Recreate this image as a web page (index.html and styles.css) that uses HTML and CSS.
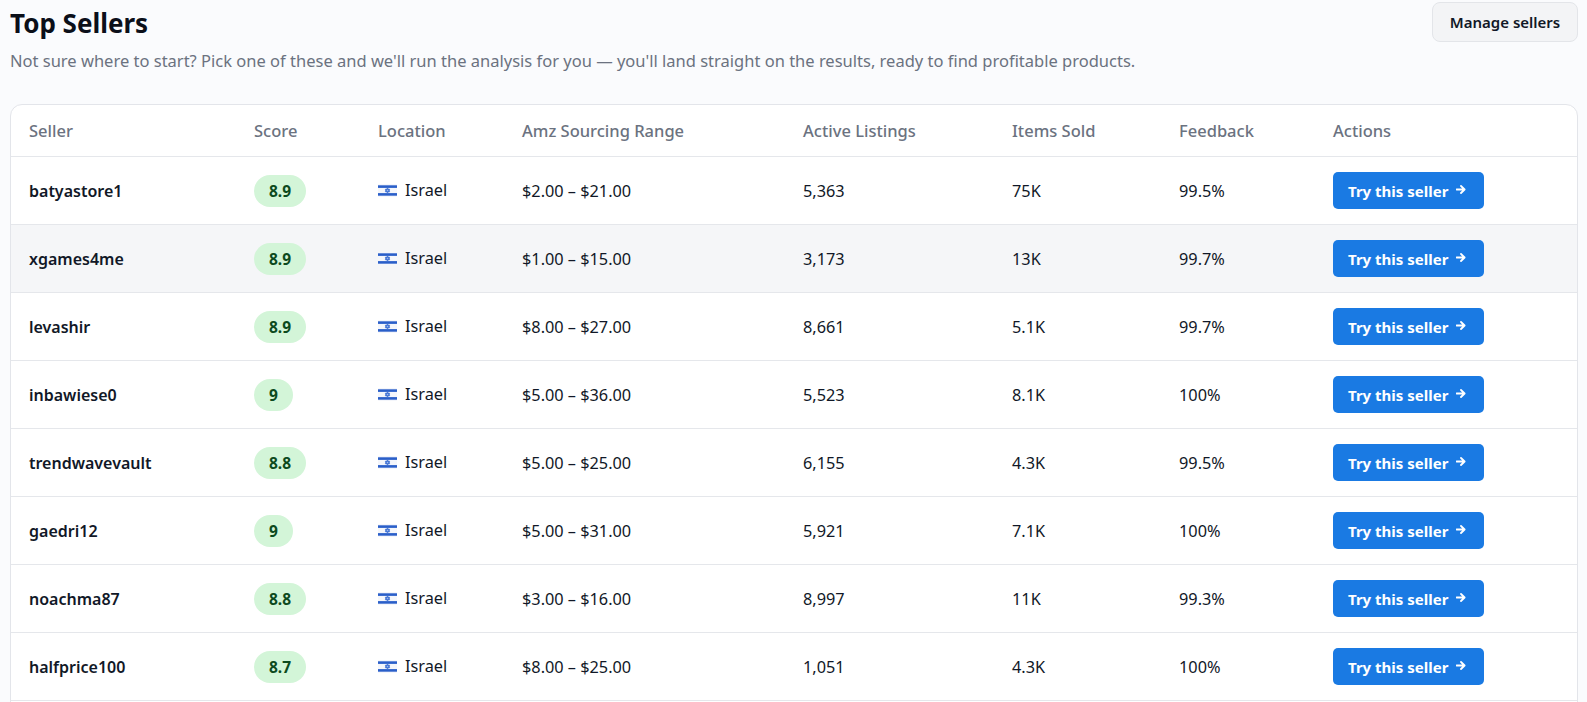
FILE: index.html
```html
<!DOCTYPE html>
<html lang="en">
<head>
<meta charset="utf-8">
<title>Top Sellers</title>
<link rel="stylesheet" href="styles.css">
</head>
<body>
<svg width="0" height="0" class="defs" aria-hidden="true">
  <defs>
    <symbol id="il" viewBox="0 0 19 13">
      <rect x="0" y="0" width="19" height="13" rx="1" fill="#f4f6fb"/>
      <rect x="0" y="1.3" width="19" height="2.6" fill="#2a5fc9"/>
      <rect x="0" y="9.1" width="19" height="2.6" fill="#2a5fc9"/>
      <circle cx="9.5" cy="6.5" r="2" fill="#9fb9ea"/>
      <polygon points="9.5,4.1 11.7,7.7 7.3,7.7" fill="none" stroke="#3d6fd3" stroke-width="0.9"/>
      <polygon points="9.5,8.9 11.7,5.3 7.3,5.3" fill="none" stroke="#3d6fd3" stroke-width="0.9"/>
    </symbol>
    <symbol id="arrow" viewBox="0 0 10 9">
      <path d="M0.5 4.5H8.5M5 1L8.6 4.5L5 8" fill="none" stroke="#fff" stroke-width="1.8" stroke-linecap="round" stroke-linejoin="round"/>
    </symbol>
  </defs>
</svg>
<div class="page">
  <header class="top">
    <div class="titles">
      <h1 class="title">Top Sellers</h1>
      <p class="subtitle">Not sure where to start? Pick one of these and we'll run the analysis for you — you'll land straight on the results, ready to find profitable products.</p>
    </div>
    <button class="manage">Manage sellers</button>
  </header>

  <div class="card">
    <table class="grid">
      <colgroup>
        <col class="c1"><col class="c2"><col class="c3"><col class="c4"><col class="c5"><col class="c6"><col class="c7"><col class="c8">
      </colgroup>
      <thead>
        <tr><th>Seller</th><th>Score</th><th>Location</th><th>Amz Sourcing Range</th><th>Active Listings</th><th>Items Sold</th><th>Feedback</th><th>Actions</th></tr>
      </thead>
      <tbody>
        <tr><td class="name">batyastore1</td><td><span class="score">8.9</span></td><td><span class="loc"><svg class="flag"><use href="#il"/></svg>Israel</span></td><td>$2.00 – $21.00</td><td>5,363</td><td>75K</td><td>99.5%</td><td><button class="try">Try this seller<svg class="arr"><use href="#arrow"/></svg></button></td></tr>
        <tr class="hover"><td class="name">xgames4me</td><td><span class="score">8.9</span></td><td><span class="loc"><svg class="flag"><use href="#il"/></svg>Israel</span></td><td>$1.00 – $15.00</td><td>3,173</td><td>13K</td><td>99.7%</td><td><button class="try">Try this seller<svg class="arr"><use href="#arrow"/></svg></button></td></tr>
        <tr><td class="name">levashir</td><td><span class="score">8.9</span></td><td><span class="loc"><svg class="flag"><use href="#il"/></svg>Israel</span></td><td>$8.00 – $27.00</td><td>8,661</td><td>5.1K</td><td>99.7%</td><td><button class="try">Try this seller<svg class="arr"><use href="#arrow"/></svg></button></td></tr>
        <tr><td class="name">inbawiese0</td><td><span class="score">9</span></td><td><span class="loc"><svg class="flag"><use href="#il"/></svg>Israel</span></td><td>$5.00 – $36.00</td><td>5,523</td><td>8.1K</td><td>100%</td><td><button class="try">Try this seller<svg class="arr"><use href="#arrow"/></svg></button></td></tr>
        <tr><td class="name">trendwavevault</td><td><span class="score">8.8</span></td><td><span class="loc"><svg class="flag"><use href="#il"/></svg>Israel</span></td><td>$5.00 – $25.00</td><td>6,155</td><td>4.3K</td><td>99.5%</td><td><button class="try">Try this seller<svg class="arr"><use href="#arrow"/></svg></button></td></tr>
        <tr><td class="name">gaedri12</td><td><span class="score">9</span></td><td><span class="loc"><svg class="flag"><use href="#il"/></svg>Israel</span></td><td>$5.00 – $31.00</td><td>5,921</td><td>7.1K</td><td>100%</td><td><button class="try">Try this seller<svg class="arr"><use href="#arrow"/></svg></button></td></tr>
        <tr><td class="name">noachma87</td><td><span class="score">8.8</span></td><td><span class="loc"><svg class="flag"><use href="#il"/></svg>Israel</span></td><td>$3.00 – $16.00</td><td>8,997</td><td>11K</td><td>99.3%</td><td><button class="try">Try this seller<svg class="arr"><use href="#arrow"/></svg></button></td></tr>
        <tr><td class="name">halfprice100</td><td><span class="score">8.7</span></td><td><span class="loc"><svg class="flag"><use href="#il"/></svg>Israel</span></td><td>$8.00 – $25.00</td><td>1,051</td><td>4.3K</td><td>100%</td><td><button class="try">Try this seller<svg class="arr"><use href="#arrow"/></svg></button></td></tr>
      </tbody>
    </table>
  </div>
</div>
</body>
</html>
```

FILE: styles.css
```css
* { box-sizing: border-box; }
html, body { margin: 0; padding: 0; height: 702px; overflow: hidden; }
body {
  background: #fafbfd;
  font-family: "Noto Sans", "Open Sans", sans-serif;
  color: #111827;
}
.defs { position: absolute; width: 0; height: 0; }
.page {
  height: 702px;
  overflow: hidden;
  padding: 2px 9px 0 10px;
}
.top {
  display: flex;
  justify-content: space-between;
  align-items: flex-start;
}
.title {
  margin: 3px 0 0;
  font-size: 26px;
  line-height: 36px;
  font-weight: 700;
  color: #0b0f19;
}
.subtitle {
  margin: 8px 0 0;
  font-size: 16.5px;
  line-height: 24px;
  color: #6b7280;
}
.manage {
  height: 40px;
  width: 146px;
  padding: 0;
  background: #f3f4f6;
  border: 1px solid #e3e5e9;
  border-radius: 8px;
  font-family: inherit;
  font-size: 15px;
  font-weight: 600;
  color: #111827;
}
.card {
  margin-top: 31px;
  padding-bottom: 40px;
  background: #fff;
  border: 1px solid #e3e5ea;
  border-radius: 12px;
  overflow: hidden;
}
.grid {
  width: 100%;
  border-collapse: separate;
  border-spacing: 0;
  table-layout: fixed;
}
.c1 { width: 225px; } .c2 { width: 124px; } .c3 { width: 144px; } .c4 { width: 281px; }
.c5 { width: 209px; } .c6 { width: 167px; } .c7 { width: 154px; } .c8 { width: auto; }
th {
  text-align: left;
  font-weight: 500;
  font-size: 16.5px;
  color: #6b7280;
  height: 52px;
  padding: 0 0 0 18px;
  border-bottom: 1px solid #e5e7eb;
}
td {
  height: 68px;
  padding: 0 0 0 18px;
  font-size: 16.3px;
  color: #111827;
  border-bottom: 1px solid #e5e7eb;
}
tr.hover td { background: #f5f6f8; }
td.name { font-weight: 600; font-size: 16px; }
.score {
  display: inline-block;
  padding: 0 15px;
  height: 32px;
  line-height: 32px;
  border-radius: 16px;
  background: #d3f5d8;
  color: #0d4a1e;
  font-size: 15.5px;
  font-weight: 700;
  text-align: center;
}
.loc { display: inline-flex; align-items: center; gap: 8px; }
.flag { width: 19px; height: 13px; }
.try {
  display: inline-flex;
  align-items: center;
  height: 37px;
  width: 151px;
  padding: 0 0 0 15px;
  background: #1a7ae3;
  color: #fff;
  border: none;
  border-radius: 5px;
  font-family: inherit;
  font-size: 15px;
  font-weight: 700;
}
.arr { width: 10px; height: 9px; margin: -3px 0 0 8px; }
```
